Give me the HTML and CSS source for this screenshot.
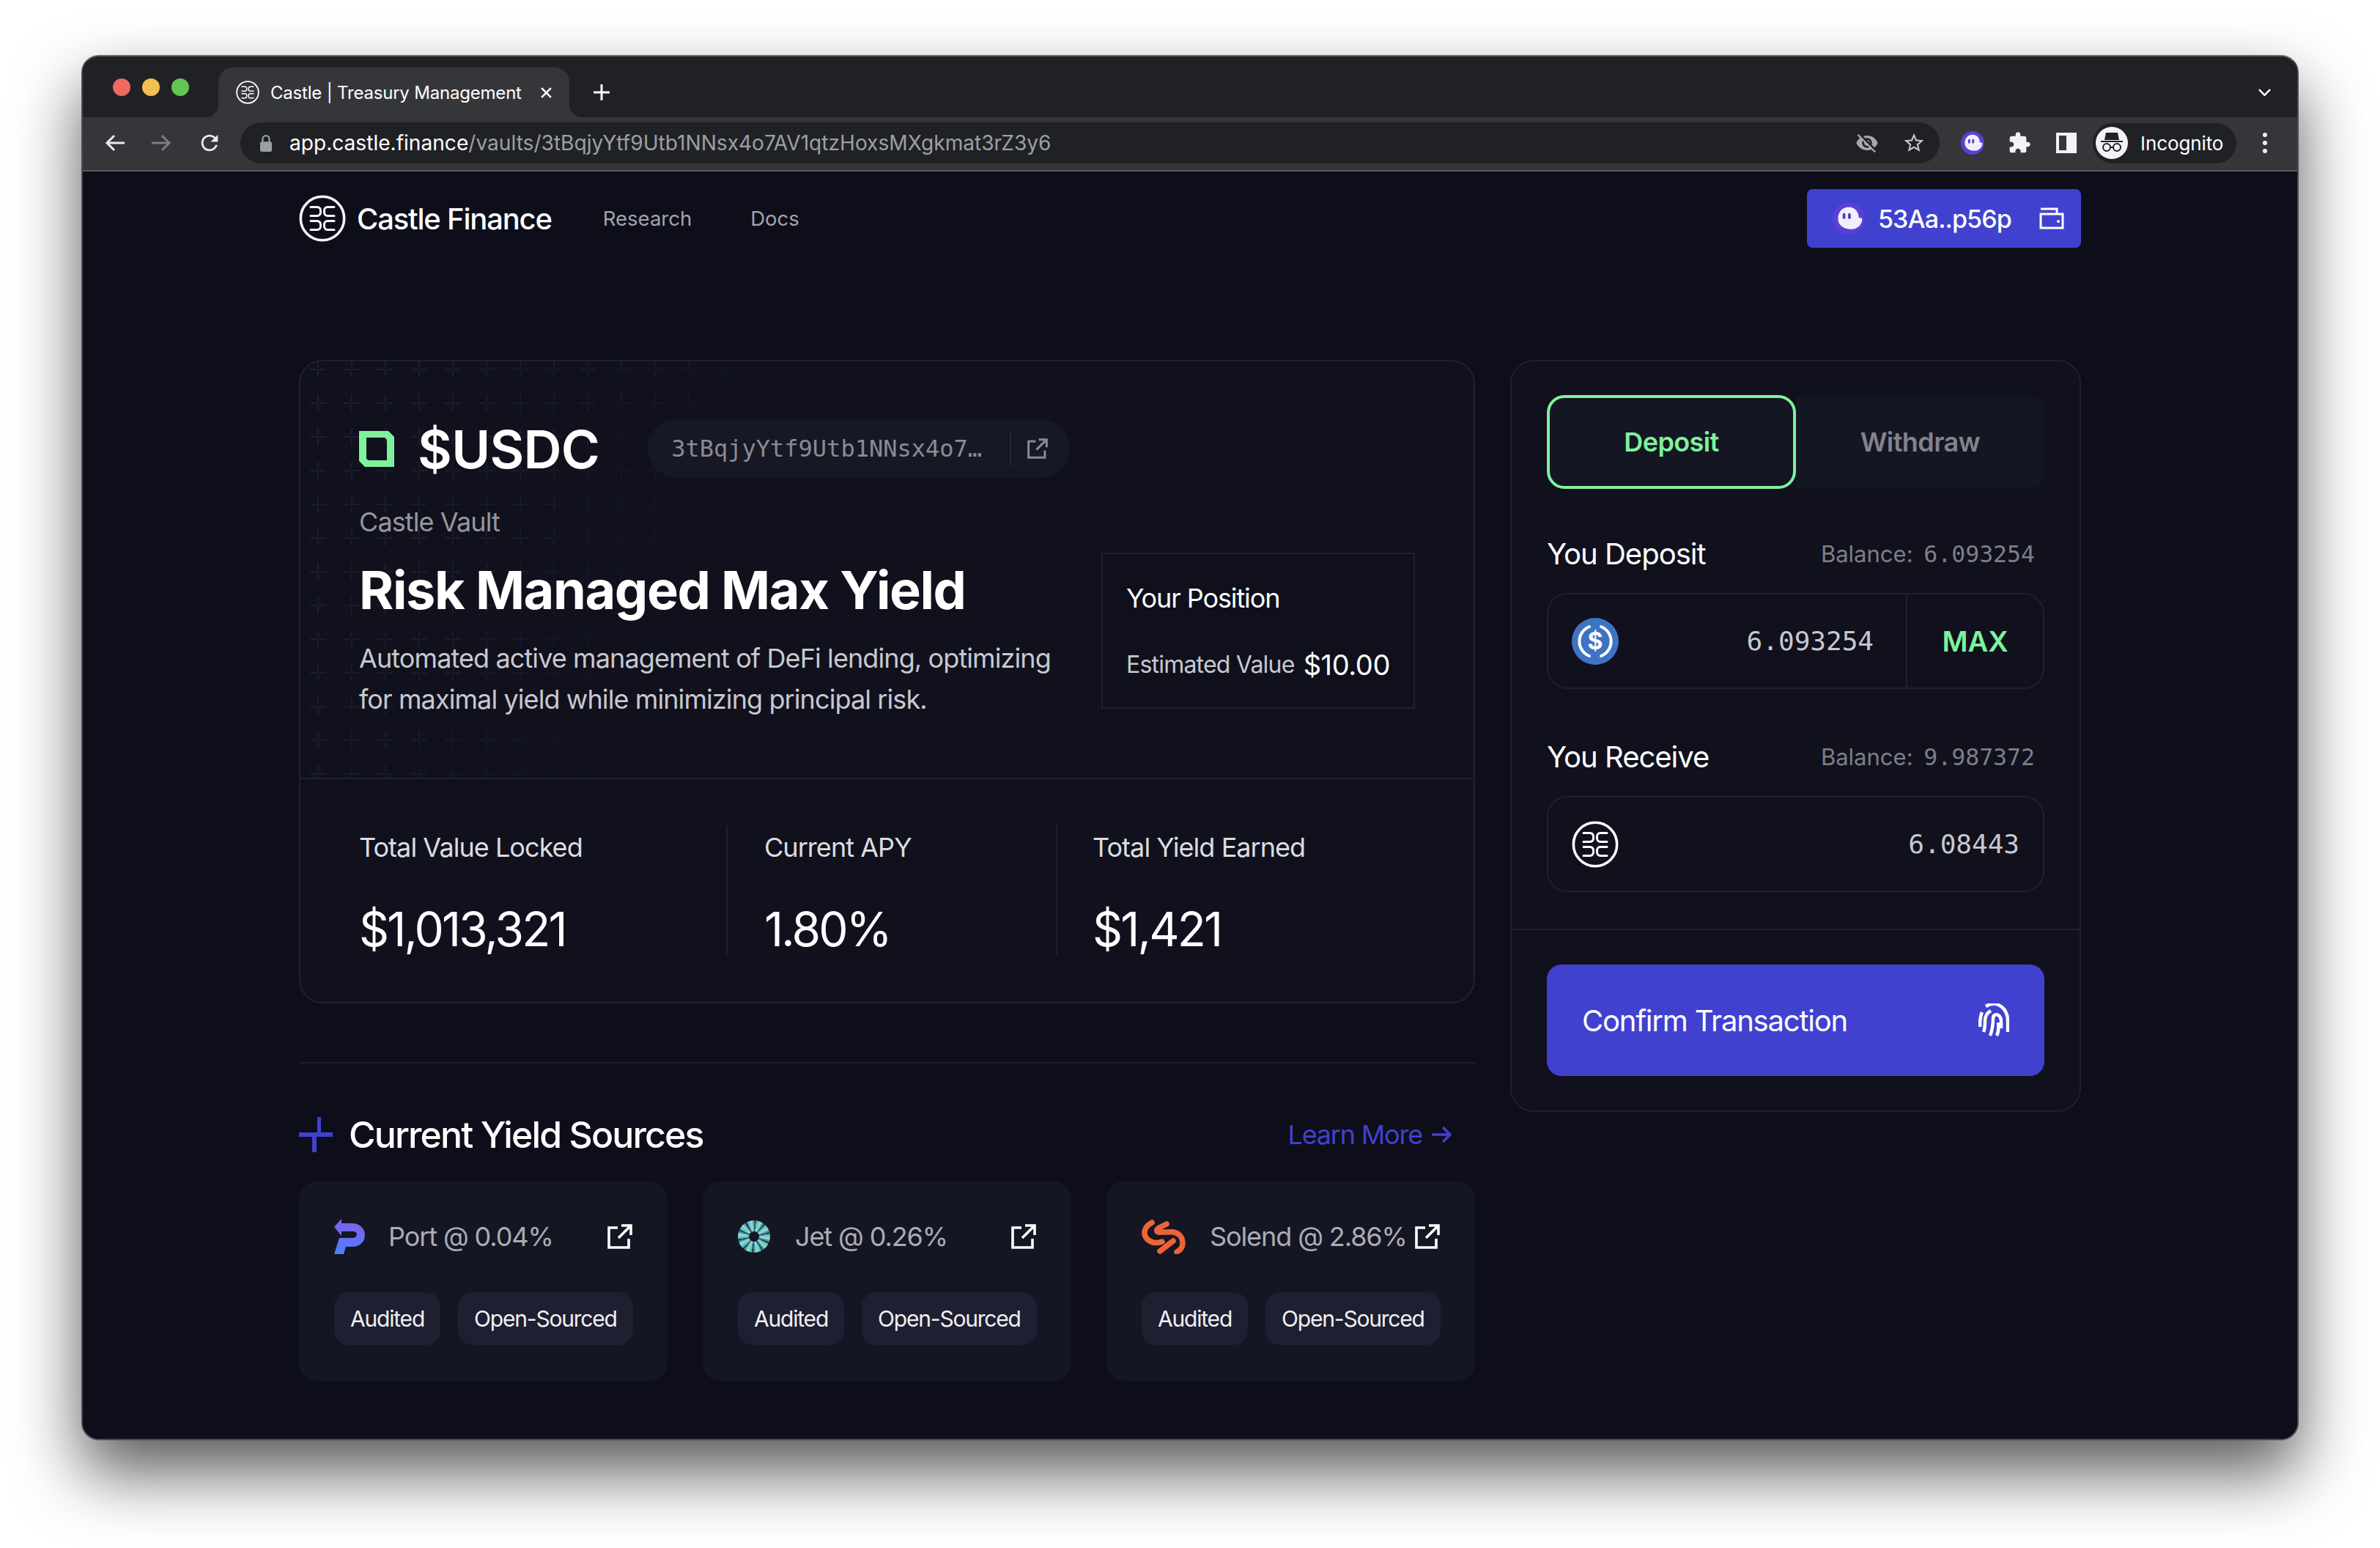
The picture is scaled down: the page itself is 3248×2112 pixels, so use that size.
FILE: index.html
```html
<!DOCTYPE html>
<html lang="en">
<head>
    <meta charset="UTF-8">
    <title>Castle | Treasury Management</title>
    <link rel="stylesheet" href="styles.css">
</head>
<body>
    <svg class="defs" width="0" height="0">
        <defs>
            <symbol id="castle" viewBox="0 0 64 64">
                <circle cx="32" cy="32" r="29.7" fill="none" stroke="currentColor" stroke-width="3.6"/>
                <path fill="none" stroke="currentColor" stroke-width="3" stroke-linecap="round" d="M16 16.5h9a4.500 4.500 0 0 1 4.500 4.500v3a4.500 4.500 0 0 1-4.500 4.500h-9M48 16.500h-9a4.500 4.500 0 0 0-4.500 4.500v3a4.500 4.500 0 0 0 4.500 4.500h9M16 35.500h9a4.500 4.500 0 0 1 4.500 4.500v3a4.500 4.500 0 0 1-4.500 4.500h-9M48 35.500h-9a4.500 4.500 0 0 0-4.500 4.500v3a4.500 4.500 0 0 0 4.500 4.500h9"/>
            </symbol>
            <symbol id="external" viewBox="0 0 34 34">
                <path fill="none" stroke="currentColor" stroke-width="3.600" d="M14 5H2v27h27V20M19 2h13v13M32 2L15 19"/>
            </symbol>
            <symbol id="phantom" viewBox="0 0 48 48">
                <circle cx="24" cy="24" r="24" fill="#5a3fd6"/>
                <path fill="#f1effc" d="M8 24C8 14 15 7 24 7s15 7 15 16c3 0 5 1 5 2 0 8-7 15-16 15-12 0-20-6-20-16z"/>
                <rect x="15" y="16" width="4" height="9" rx="2" fill="#4a3cc0"/>
                <rect x="23" y="16" width="4" height="9" rx="2" fill="#4a3cc0"/>
            </symbol>
        </defs>
    </svg>

    <div class="window">
        <div class="tabstrip">
            <div class="lights">
                <span class="light red"></span>
                <span class="light yellow"></span>
                <span class="light green"></span>
            </div>
            <div class="tab">
                <svg class="tab-logo"><use href="#castle"/></svg>
                <span class="tab-title">Castle | Treasury Management</span>
                <svg class="tab-close" viewBox="0 0 16 16"><path d="M2 2l12 12M14 2L2 14"/></svg>
            </div>
            <svg class="new-tab" viewBox="0 0 22 22"><path d="M11 0v22M0 11h22"/></svg>
            <svg class="tab-menu" viewBox="0 0 18 10"><path d="M1 1l8 8 8-8"/></svg>
        </div>

        <div class="toolbar">
            <svg class="nav-icon" viewBox="0 0 28 24"><path d="M27 12H3M13 2L3 12l10 10"/></svg>
            <svg class="nav-icon dim" viewBox="0 0 28 24"><path d="M1 12h24M15 2l10 10-10 10"/></svg>
            <svg class="nav-icon reload" viewBox="0 0 24 24"><path d="M17.650 6.350C16.200 4.900 14.210 4 12 4c-4.420 0-7.990 3.580-7.990 8s3.570 8 7.990 8c3.730 0 6.840-2.550 7.730-6h-2.080c-.820 2.330-3.040 4-5.650 4-3.310 0-6-2.690-6-6s2.690-6 6-6c1.660 0 3.140.690 4.220 1.780L13 11h7V4l-2.350 2.350z"/></svg>
            <div class="omnibox">
                <svg class="lock" viewBox="0 0 14 20"><path d="M3 8V5a4 4 0 0 1 8 0v3" fill="none" stroke="#9aa0a6" stroke-width="2"/><rect y="8" width="14" height="12" rx="2" fill="#9aa0a6"/></svg>
                <span class="url"><span class="url-host">app.castle.finance</span>/vaults/3tBqjyYtf9Utb1NNsx4o7AV1qtzHoxsMXgkmat3rZ3y6</span>
                <svg class="omni-icon" viewBox="0 0 24 24"><path d="M12 7c2.760 0 5 2.240 5 5 0 .650-.130 1.260-.360 1.830l2.920 2.920c1.510-1.260 2.700-2.890 3.430-4.750-1.730-4.390-6-7.500-11-7.500-1.400 0-2.740.250-3.980.700l2.160 2.160C10.740 7.130 11.350 7 12 7zM2 4.270l2.280 2.280.460.460C3.080 8.300 1.780 10.020 1 12c1.730 4.390 6 7.500 11 7.500 1.550 0 3.030-.300 4.380-.840l.420.420L19.730 22 21 20.730 3.270 3 2 4.270zM7.530 9.800l1.550 1.550c-.050.210-.080.430-.080.650 0 1.660 1.340 3 3 3 .220 0 .440-.030.650-.080l1.550 1.550c-.670.330-1.410.530-2.200.530-2.760 0-5-2.240-5-5 0-.790.200-1.530.530-2.200zm4.310-.780l3.150 3.150.020-.160c0-1.660-1.340-3-3-3l-.170.010z"/></svg>
                <svg class="omni-icon star" viewBox="0 0 24 24"><path d="M22 9.240l-7.190-.620L12 2 9.190 8.630 2 9.240l5.460 4.730L5.820 21 12 17.270 18.180 21l-1.630-7.030L22 9.240zM12 15.400l-3.760 2.270 1-4.280-3.320-2.880 4.380-.380L12 6.100l1.710 4.040 4.380.380-3.320 2.880 1 4.280L12 15.400z"/></svg>
            </div>
            <svg class="ext-icon"><use href="#phantom"/></svg>
            <svg class="ext-icon puzzle" viewBox="0 0 24 24"><path d="M20.500 11H19V7c0-1.100-.900-2-2-2h-4V3.500C13 2.120 11.880 1 10.500 1S8 2.120 8 3.500V5H4c-1.100 0-1.990.900-1.990 2v3.800H3.500c1.490 0 2.700 1.210 2.700 2.700s-1.210 2.700-2.700 2.700H2V20c0 1.100.900 2 2 2h3.800v-1.500c0-1.490 1.210-2.700 2.700-2.700 1.490 0 2.700 1.210 2.700 2.700V22H17c1.100 0 2-.900 2-2v-4h1.500c1.380 0 2.500-1.120 2.500-2.500S21.880 11 20.500 11z"/></svg>
            <svg class="ext-icon panel" viewBox="0 0 28 28"><path fill-rule="evenodd" d="M0 0h28v28H0zM4 4v20h10V4z"/></svg>
            <div class="profile">
                <svg class="avatar" viewBox="0 0 44 44">
                    <circle cx="22" cy="22" r="22" fill="#f1f3f4"/>
                    <path fill="#202124" d="M14 8h16l2 10H12zM7 19h30v2H7z"/>
                    <circle cx="15" cy="28" r="5" fill="none" stroke="#202124" stroke-width="2"/>
                    <circle cx="29" cy="28" r="5" fill="none" stroke="#202124" stroke-width="2"/>
                    <path d="M20 28h4" stroke="#202124" stroke-width="2"/>
                </svg>
                <span class="profile-name">Incognito</span>
            </div>
            <div class="kebab"><span></span><span></span><span></span></div>
        </div>

        <div class="page">
            <div class="container">
                <div class="nav">
                    <svg class="nav-logo"><use href="#castle"/></svg>
                    <span class="brand">Castle Finance</span>
                    <a class="nav-link research">Research</a>
                    <a class="nav-link docs">Docs</a>
                    <button class="wallet">
                        <svg class="wallet-phantom"><use href="#phantom"/></svg>
                        <span class="wallet-address">53Aa..p56p</span>
                        <svg class="wallet-icon" viewBox="0 0 34 30"><path fill="none" stroke="#fff" stroke-width="3" d="M2 2h22v7M2 9h30v19H2z"/><circle cx="26" cy="19" r="2" fill="#fff"/></svg>
                    </button>
                </div>

                <div class="columns">
                    <div class="left">
                        <div class="card">
                            <div class="card-top">
                                <svg class="plus-grid" width="800" height="568">
                                    <defs>
                                        <pattern id="plus" x="1" y="-1" width="46" height="46" patternUnits="userSpaceOnUse">
                                            <path d="M12 0v10M12 13v10M1 12h10M13 12h10" stroke="#22233a" stroke-width="1.500"/>
                                        </pattern>
                                        <linearGradient id="fade" x1="0" x2="1" y1="0" y2="0.300">
                                            <stop offset="0" stop-color="#fff"/>
                                            <stop offset="0.450" stop-color="#fff" stop-opacity="0.700"/>
                                            <stop offset="0.800" stop-color="#fff" stop-opacity="0"/>
                                        </linearGradient>
                                        <mask id="plus-mask"><rect width="800" height="568" fill="url(#fade)"/></mask>
                                    </defs>
                                    <rect width="800" height="568" fill="url(#plus)" mask="url(#plus-mask)"/>
                                </svg>

                                <div class="token-row">
                                    <svg class="token-mark" viewBox="0 0 48 49"><path fill="#7ef29b" fill-rule="evenodd" d="M0 0h40l8 8v41H8l-8-8zM10 9v29l3 2h25V12l-3-3z"/></svg>
                                    <span class="token-name">$USDC</span>
                                    <div class="address">
                                        <span class="address-text">3tBqjyYtf9Utb1NNsx4o7…</span>
                                        <span class="address-link"><svg class="address-icon"><use href="#external"/></svg></span>
                                    </div>
                                </div>

                                <div class="vault-row">
                                    <div class="vault-info">
                                        <div class="vault-type">Castle Vault</div>
                                        <h1 class="vault-title">Risk Managed Max Yield</h1>
                                        <p class="vault-desc">Automated active management of DeFi lending, optimizing for maximal yield while minimizing principal risk.</p>
                                    </div>
                                    <div class="position">
                                        <div class="position-title">Your Position</div>
                                        <div class="position-row">
                                            <span class="position-label">Estimated Value</span>
                                            <span class="position-value">$10.00</span>
                                        </div>
                                    </div>
                                </div>
                            </div>

                            <div class="stats">
                                <div class="stat stat-tvl">
                                    <div class="stat-label">Total Value Locked</div>
                                    <div class="stat-value">$1,013,321</div>
                                </div>
                                <div class="stat stat-apy">
                                    <div class="stat-label">Current APY</div>
                                    <div class="stat-value">1.80%</div>
                                </div>
                                <div class="stat stat-yield">
                                    <div class="stat-label">Total Yield Earned</div>
                                    <div class="stat-value">$1,421</div>
                                </div>
                            </div>
                        </div>

                        <div class="divider"></div>

                        <div class="sources-head">
                            <svg class="sources-plus" viewBox="0 0 46 48"><path fill="#4141cf" d="M25 0h5v21h16v6H24v21h-6V27H0v-6h25z"/></svg>
                            <h2 class="sources-title">Current Yield Sources</h2>
                            <a class="learn-more">Learn More
                                <svg class="learn-arrow" viewBox="0 0 28 24"><path d="M1 12h25M16 2l10 10-10 10"/></svg>
                            </a>
                        </div>

                        <div class="sources">
                            <div class="source">
                                <div class="source-head">
                                    <svg class="source-logo port" viewBox="0 0 42 48">
                                        <defs>
                                            <linearGradient id="port" x1="0" x2="0" y1="0" y2="1">
                                                <stop offset="0" stop-color="#8260e6"/>
                                                <stop offset="1" stop-color="#4d7dff"/>
                                            </linearGradient>
                                        </defs>
                                        <path fill="url(#port)" d="M10 0v6h14c11 0 18 7 18 16 0 10-8 16-17 16h-9l-3 10H0l7-22h17c4 0 7-2 7-5 0-2-2-4-6-4h-15v6L0 11z"/>
                                    </svg>
                                    <span class="source-name">Port @ 0.04%</span>
                                    <svg class="source-link"><use href="#external"/></svg>
                                </div>
                                <div class="tags">
                                    <span class="tag">Audited</span>
                                    <span class="tag">Open-Sourced</span>
                                </div>
                            </div>
                            <div class="source">
                                <div class="source-head">
                                    <div class="jet-logo"><span class="jet-hole"></span></div>
                                    <span class="source-name jet-name">Jet @ 0.26%</span>
                                    <svg class="source-link"><use href="#external"/></svg>
                                </div>
                                <div class="tags">
                                    <span class="tag">Audited</span>
                                    <span class="tag">Open-Sourced</span>
                                </div>
                            </div>
                            <div class="source">
                                <div class="source-head">
                                    <svg class="source-logo solend" viewBox="0 0 60 47"><path fill="none" stroke="#ef6436" stroke-width="7.500" stroke-linecap="round" d="M14 4C3 10 1 20 8 27c6 5 12 6 20 3M34 6L24 11c-5 3-4 7 2 6h10c12-2 20 5 20 15 0 6-4 10-8 12M43 29L25 43"/></svg>
                                    <span class="source-name solend-name">Solend @ 2.86%</span>
                                    <svg class="source-link"><use href="#external"/></svg>
                                </div>
                                <div class="tags">
                                    <span class="tag">Audited</span>
                                    <span class="tag">Open-Sourced</span>
                                </div>
                            </div>
                        </div>
                    </div>

                    <div class="panel-card">
                        <div class="panel-main">
                            <div class="mode-tabs">
                                <div class="mode active">Deposit</div>
                                <div class="mode">Withdraw</div>
                            </div>

                            <div class="field-head">
                                <span class="field-label">You Deposit</span>
                                <span class="balance">Balance: <span class="mono">6.093254</span></span>
                            </div>
                            <div class="field">
                                <svg class="field-icon" viewBox="0 0 64 64">
                                    <circle cx="32" cy="32" r="32" fill="#3e73c4"/>
                                    <path fill="none" stroke="#fff" stroke-width="4" stroke-linecap="round" d="M24 12a21.500 21.500 0 0 0 0 40M40 12a21.500 21.500 0 0 1 0 40"/>
                                    <text class="usdc-sign" x="32" y="43" text-anchor="middle">$</text>
                                </svg>
                                <span class="field-value">6.093254</span>
                                <span class="max">MAX</span>
                            </div>

                            <div class="field-head second">
                                <span class="field-label">You Receive</span>
                                <span class="balance">Balance: <span class="mono">9.987372</span></span>
                            </div>
                            <div class="field receive">
                                <svg class="field-icon"><use href="#castle"/></svg>
                                <span class="field-value">6.08443</span>
                            </div>
                        </div>

                        <div class="panel-foot">
                            <button class="confirm">
                                <span>Confirm Transaction</span>
                                <svg class="finger" viewBox="20 16 42 46"><path d="M30 20c8-5 16-4 22 1 6 5 8 11 8 19v15M25 28c-3 6-3 12-3 20M37 26c-6 3-8 8-8 14 0 6 0 10-2 15M36 60c3-8 4-16 4-24 0-4 4-6 7-4 4 2 4 6 4 10v8M47 42c1 8 0 14-2 18"/></svg>
                            </button>
                        </div>
                    </div>
                </div>
            </div>
        </div>
    </div>
</body>
</html>
```

FILE: styles.css
```css
* {
    box-sizing: border-box;
}
html, body {
    margin: 0;
    height: 2112px;
    overflow: hidden;
    background: #fff;
}
body {
    padding: 75px 111px 0;
    font-family: Inter, "Liberation Sans", sans-serif;
    color: #fff;
}
.defs {
    position: absolute;
}
h1, h2, p {
    margin: 0;
}
.mono {
    font-family: "DejaVu Sans Mono", monospace;
}

/* browser frame */
.window {
    width: 3026px;
    height: 1890px;
    border: 2px solid #4a4a55;
    border-top-color: #6a6a6e;
    border-radius: 24px;
    overflow: hidden;
    background: #0d0e1a;
    box-shadow: 0 44px 90px rgba(0,0,0,0.65);
}
.tabstrip {
    display: flex;
    align-items: flex-end;
    height: 83px;
    padding-left: 41px;
    background: #202124;
}
.lights {
    display: flex;
    gap: 16px;
    align-self: center;
}
.light {
    width: 24px;
    height: 24px;
    border-radius: 50%;
}
.red { background: #ec6a5e; }
.yellow { background: #f4bf4f; }
.green { background: #61c554; }
.tab {
    position: relative;
    display: flex;
    align-items: center;
    width: 479px;
    height: 68px;
    margin-left: 40px;
    padding-left: 24px;
    background: #35363a;
    border-radius: 20px 20px 0 0;
}
.tab::before, .tab::after {
    content: "";
    position: absolute;
    bottom: 0;
    width: 18px;
    height: 18px;
}
.tab::before {
    left: -18px;
    background: radial-gradient(circle at 0 0, transparent 18px, #35363a 18.5px);
}
.tab::after {
    right: -18px;
    background: radial-gradient(circle at 100% 0, transparent 18px, #35363a 18.5px);
}
.tab-logo {
    width: 32px;
    height: 32px;
    color: #fff;
}
.tab-title {
    margin-left: 15px;
    font-size: 24px;
    letter-spacing: -0.2px;
    white-space: nowrap;
}
.tab-close {
    width: 17px;
    height: 17px;
    margin-left: 25px;
    fill: none;
    stroke: #fff;
    stroke-width: 2.4;
}
.new-tab {
    width: 22px;
    height: 22px;
    margin: 0 0 23px 33px;
    fill: none;
    stroke: #fff;
    stroke-width: 3;
}
.tab-menu {
    width: 17px;
    height: 10px;
    margin: 0 36px 29px auto;
    fill: none;
    stroke: #fff;
    stroke-width: 2.6;
}
.toolbar {
    display: flex;
    align-items: center;
    height: 74px;
    padding: 0 0 2px 30px;
    background: #35363a;
    border-bottom: 2px solid #5a5b60;
}
.nav-icon {
    width: 28px;
    height: 24px;
    margin-right: 35px;
    fill: none;
    stroke: #e8eaed;
    stroke-width: 3;
}
.nav-icon.dim {
    stroke: #7c7d80;
}
.nav-icon.reload {
    width: 34px;
    height: 34px;
    margin-right: 25px;
    fill: #e8eaed;
    stroke: none;
}
.omnibox {
    display: flex;
    align-items: center;
    width: 2319px;
    height: 56px;
    padding-left: 27px;
    background: #202124;
    border-radius: 28px;
}
.lock {
    width: 16px;
    height: 23px;
}
.url {
    margin-left: 24px;
    font-size: 28.100px;
    color: #9aa0a6;
    white-space: nowrap;
}
.url-host {
    color: #fff;
}
.omni-icon {
    width: 32px;
    height: 32px;
    margin-left: auto;
    fill: #a8a9ac;
}
.omni-icon.star {
    margin: 0 19px 0 32px;
    fill: #c4c5c7;
}
.ext-icon {
    width: 32px;
    height: 32px;
    margin-left: 29px;
}
.ext-icon.puzzle {
    margin-left: 32px;
    fill: #f1f3f4;
}
.ext-icon.panel {
    width: 28px;
    height: 28px;
    margin-left: 34px;
    fill: #f1f3f4;
}
.profile {
    display: flex;
    align-items: center;
    width: 196px;
    height: 55px;
    margin-left: 22px;
    padding-left: 4px;
    background: #202124;
    border-radius: 28px;
}
.avatar {
    width: 44px;
    height: 44px;
}
.profile-name {
    margin-left: 17px;
    font-size: 26px;
    letter-spacing: -0.1px;
}
.kebab {
    display: flex;
    flex-direction: column;
    gap: 5px;
    margin-left: 36px;
}
.kebab span {
    width: 6px;
    height: 6px;
    border-radius: 50%;
    background: #f1f3f4;
}

/* page */
.page {
    height: 1730px;
    background: #0d0e1a;
}
.container {
    width: 2432px;
    margin: 0 auto;
}
.nav {
    display: flex;
    align-items: center;
    padding-top: 24px;
}
.nav-logo {
    width: 64px;
    height: 64px;
    color: #f4f4f6;
}
.brand {
    margin-left: 15px;
    font-size: 40px;
    font-weight: 500;
    letter-spacing: -1.2px;
}
.nav-link {
    font-size: 27.500px;
    color: #a3a3ab;
}
.research {
    margin-left: 70px;
}
.docs {
    margin-left: 80px;
}
.wallet {
    display: flex;
    align-items: center;
    width: 374px;
    height: 80px;
    margin-left: auto;
    padding: 0 23px 0 35px;
    border: none;
    border-radius: 8px;
    background: #4141cf;
    color: #fff;
    font-family: inherit;
}
.wallet-phantom {
    width: 44px;
    height: 46px;
}
.wallet-address {
    margin-left: 18px;
    font-size: 34px;
    font-weight: 500;
    letter-spacing: -0.9px;
}
.wallet-icon {
    width: 34px;
    height: 30px;
    margin-left: auto;
}
.columns {
    display: flex;
    gap: 48px;
    align-items: flex-start;
    margin-top: 153px;
}
.left {
    width: 1605px;
}

/* vault card */
.card {
    border: 2px solid #20212e;
    border-radius: 32px;
    background: #10111d;
    overflow: hidden;
}
.card-top {
    position: relative;
    height: 570px;
    padding: 79px 80px 0;
    border-bottom: 2px solid #20212e;
}
.plus-grid {
    position: absolute;
    left: 11px;
    top: 0;
}
.token-row {
    position: relative;
    display: flex;
    align-items: center;
    height: 80px;
}
.token-mark {
    width: 48px;
    height: 49px;
}
.token-name {
    margin-left: 32px;
    font-size: 72px;
    font-weight: 600;
    letter-spacing: -0.7px;
}
.address {
    display: flex;
    align-items: center;
    width: 576px;
    height: 80px;
    margin-left: 66px;
    padding-left: 32px;
    border-radius: 40px;
    background: #171826;
}
.address-text {
    width: 462px;
    font-family: "DejaVu Sans Mono", monospace;
    font-size: 32px;
    color: #8a8b92;
    white-space: nowrap;
}
.address-link {
    display: flex;
    align-items: center;
    height: 48px;
    padding-left: 22px;
    border-left: 2px solid #26273a;
}
.address-icon {
    width: 28px;
    height: 28px;
    color: #8a8b92;
}
.vault-row {
    position: relative;
    display: flex;
    margin-top: 38px;
}
.vault-info {
    width: 1013px;
}
.vault-type {
    font-size: 36px;
    line-height: 44px;
    letter-spacing: -0.9px;
    color: #96969e;
}
.vault-title {
    margin-top: 27px;
    font-size: 72px;
    line-height: 88px;
    font-weight: 700;
    letter-spacing: -1.4px;
}
.vault-desc {
    width: 980px;
    margin-top: 21px;
    font-size: 36px;
    line-height: 56px;
    letter-spacing: -0.9px;
    color: #c8c8cf;
}
.position {
    width: 428px;
    height: 213px;
    margin-top: 64px;
    padding: 38px 32px 0;
    border: 2px solid #20212e;
    background: #0f101c;
}
.position-title {
    font-size: 36px;
    line-height: 44px;
    letter-spacing: -1.1px;
}
.position-row {
    display: flex;
    align-items: center;
    justify-content: space-between;
    margin-top: 46px;
    line-height: 46px;
}
.position-label {
    font-size: 32px;
    letter-spacing: -0.8px;
    color: #c8c8cf;
}
.position-value {
    font-size: 38px;
    letter-spacing: -0.4px;
}
.stats {
    display: flex;
    padding: 63px 0 65px;
}
.stat {
    height: 176px;
    padding-top: 8px;
}
.stat-tvl {
    width: 583px;
    padding-left: 80px;
    border-right: 2px solid #20212e;
}
.stat-apy {
    width: 450px;
    padding-left: 50px;
    border-right: 2px solid #20212e;
}
.stat-yield {
    padding-left: 48px;
}
.stat-label {
    font-size: 36px;
    line-height: 44px;
    letter-spacing: -0.95px;
    color: #dcdce0;
}
.stat-value {
    margin-top: 51px;
    font-size: 64px;
    line-height: 78px;
    letter-spacing: -2.8px;
}
.divider {
    height: 2px;
    margin-top: 80px;
    background: #1e1f2b;
}

/* yield sources */
.sources-head {
    display: flex;
    align-items: center;
    height: 48px;
    margin-top: 73px;
}
.sources-plus {
    width: 46px;
    height: 48px;
}
.sources-title {
    margin-left: 22px;
    font-size: 50px;
    font-weight: 500;
    letter-spacing: -1.9px;
}
.learn-more {
    display: flex;
    align-items: center;
    margin-left: auto;
    padding-right: 32px;
    font-size: 36px;
    letter-spacing: -1.2px;
    color: #4141cf;
}
.learn-arrow {
    width: 28px;
    height: 24px;
    margin-left: 12px;
    fill: none;
    stroke: #4141cf;
    stroke-width: 3.5;
}
.sources {
    display: grid;
    grid-template-columns: repeat(3, minmax(0, 1fr));
    gap: 48px;
    margin-top: 40px;
}
.source {
    height: 272px;
    padding: 46px 48px 48px;
    border-radius: 24px;
    background: #151624;
}
.source-head {
    display: flex;
    align-items: center;
    height: 56px;
    margin-bottom: 48px;
    margin-top: 1px;
}
.source-logo.port {
    width: 42px;
    height: 48px;
    flex-shrink: 0;
}
.source-logo.solend {
    width: 60px;
    height: 47px;
    flex-shrink: 0;
}
.jet-logo {
    display: flex;
    align-items: center;
    justify-content: center;
    width: 44px;
    height: 44px;
    flex-shrink: 0;
    border-radius: 50%;
    background: repeating-conic-gradient(from 8deg, #48b4e6 0deg, #8fe6c4 18deg, #2a3c48 34deg, #151624 36deg, #48b4e6 36.1deg);
}
.jet-hole {
    width: 14px;
    height: 14px;
    border-radius: 50%;
    background: #151624;
}
.source-name {
    margin-left: 32px;
    font-size: 36px;
    letter-spacing: -1.1px;
    color: #acacb4;
    white-space: nowrap;
}
.solend-name {
    margin-left: 33px;
}
.jet-name {
    margin-left: 34px;
}
.source-link {
    width: 34px;
    height: 34px;
    margin-left: auto;
    flex-shrink: 0;
    color: #fff;
}
.tags {
    display: flex;
    gap: 24px;
}
.tag {
    display: flex;
    align-items: center;
    height: 72px;
    padding: 0 22px;
    border-radius: 20px;
    background: #1e1f30;
    font-size: 30px;
    letter-spacing: -1.2px;
    color: #f0f0f3;
    white-space: nowrap;
}

/* deposit panel */
.panel-card {
    width: 779px;
    border: 2px solid #20212e;
    border-radius: 32px;
    background: #10111d;
}
.panel-main {
    padding: 46px 48px 50px;
    border-bottom: 2px solid #20212e;
}
.mode-tabs {
    display: flex;
    height: 128px;
    align-items: center;
}
.mode {
    display: flex;
    align-items: center;
    justify-content: center;
    flex: 1;
    height: 124px;
    background: #151624;
    border-radius: 0 20px 20px 0;
    font-size: 36px;
    font-weight: 600;
    letter-spacing: -0.6px;
    color: #83838b;
}
.mode.active {
    flex: none;
    width: 340px;
    height: 128px;
    border: 4px solid #7ef29b;
    border-radius: 24px;
    color: #7ef29b;
}
.field-head {
    display: flex;
    align-items: center;
    justify-content: space-between;
    height: 48px;
    margin-top: 64px;
}
.field-head.second {
    margin-top: 68px;
}
.field-label {
    font-size: 40px;
    letter-spacing: -1px;
}
.balance {
    padding-right: 13px;
    font-size: 31px;
    letter-spacing: 0;
    color: #7e7e87;
}
.balance .mono {
    margin-left: 6px;
    font-size: 31.500px;
}
.field {
    display: flex;
    align-items: center;
    height: 131px;
    margin-top: 30px;
    padding-left: 32px;
    border: 2px solid #20212e;
    border-radius: 28px;
}
.field.receive {
    margin-top: 30px;
}
.field-icon {
    width: 64px;
    height: 64px;
    color: #fff;
}
.usdc-sign {
    font-family: Inter, sans-serif;
    font-size: 32px;
    font-weight: 700;
    fill: #fff;
}
.field-value {
    margin-left: auto;
    padding-right: 44px;
    font-family: "DejaVu Sans Mono", monospace;
    font-size: 36px;
    color: #c8c8cf;
}
.receive .field-value {
    padding-right: 32px;
}
.max {
    display: flex;
    align-items: center;
    justify-content: center;
    width: 187px;
    height: 100%;
    border-left: 2px solid #20212e;
    font-size: 38px;
    font-weight: 600;
    color: #7ef29b;
}
.panel-foot {
    padding: 47px 48px;
}
.confirm {
    display: flex;
    align-items: center;
    justify-content: space-between;
    width: 100%;
    height: 152px;
    padding: 0 48px;
    border: none;
    border-radius: 20px;
    background: #4141cf;
    color: #fff;
    font-family: inherit;
    font-size: 40px;
    letter-spacing: -1.2px;
}
.finger {
    width: 42px;
    height: 46px;
    fill: none;
    stroke: #fff;
    stroke-width: 4.5;
}
```
